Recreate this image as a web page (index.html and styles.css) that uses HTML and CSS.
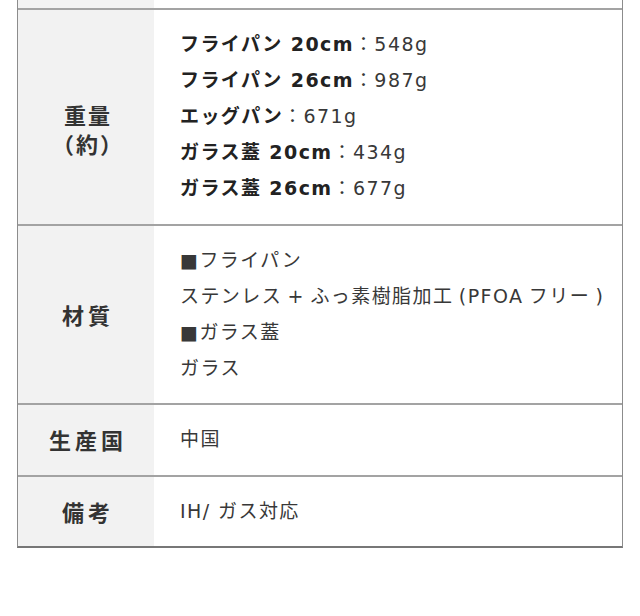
FILE: index.html
```html
<!DOCTYPE html>
<html lang="ja">
<head>
<meta charset="utf-8">
<link rel="stylesheet" href="styles.css">
</head>
<body>
<div class="spec">
  <div class="row row-cut">
    <div class="label"></div>
    <div class="value"></div>
  </div>
  <div class="row">
    <div class="label label-low">重量<br>（約）</div>
    <div class="value">
      <div><b>フライパン 20cm</b>：548g</div>
      <div><b>フライパン 26cm</b>：987g</div>
      <div><b>エッグパン</b>：671g</div>
      <div><b>ガラス蓋 20cm</b>：434g</div>
      <div><b>ガラス蓋 26cm</b>：677g</div>
    </div>
  </div>
  <div class="row">
    <div class="label">材質</div>
    <div class="value">
      <div>■フライパン</div>
      <div class="nowrap">ステンレス + ふっ素樹脂加工 (PFOA フリー )</div>
      <div>■ガラス蓋</div>
      <div>ガラス</div>
    </div>
  </div>
  <div class="row">
    <div class="label">生産国</div>
    <div class="value"><div>中国</div></div>
  </div>
  <div class="row row-last">
    <div class="label">備考</div>
    <div class="value"><div>IH/ ガス対応</div></div>
  </div>
</div>
</body>
</html>
```

FILE: styles.css
```css
html, body {
  margin: 0;
  padding: 0;
  background: #ffffff;
}

body {
  font-family: "DejaVu Sans", "Noto Sans CJK JP", sans-serif;
  color: #2a2a2a;
}

.spec {
  margin-left: 17px;
  width: 606px;
  border-left: 1px solid #8c8c8c;
  border-right: 1px solid #8c8c8c;
  border-bottom: 2px solid #777;
  box-sizing: border-box;
}

.row {
  display: grid;
  grid-template-columns: 136px 1fr;
  border-top: 2px solid #a3a3a3;
}

.row-cut {
  border-top: none;
  height: 8px;
}

.label {
  background: #f2f2f2;
  display: flex;
  align-items: center;
  justify-content: center;
  text-align: center;
  font-family: "Noto Sans CJK JP", sans-serif;
  font-weight: 700;
  font-size: 22px;
  letter-spacing: 4px;
  line-height: 29px;
  color: #333;
  padding-left: 4px;
}

.label-low {
  padding-top: 24px;
  letter-spacing: 2px;
}

.value {
  padding: 16px 0 17.5px 26px;
  font-size: 19px;
  line-height: 36px;
  letter-spacing: 0.075em;
  font-weight: 400;
  color: #383838;
}

.nowrap {
  white-space: nowrap;
  word-spacing: -2px;
}

.row-cut .value {
  padding: 0;
}

.value b {
  font-weight: 700;
  color: #222;
}
```
